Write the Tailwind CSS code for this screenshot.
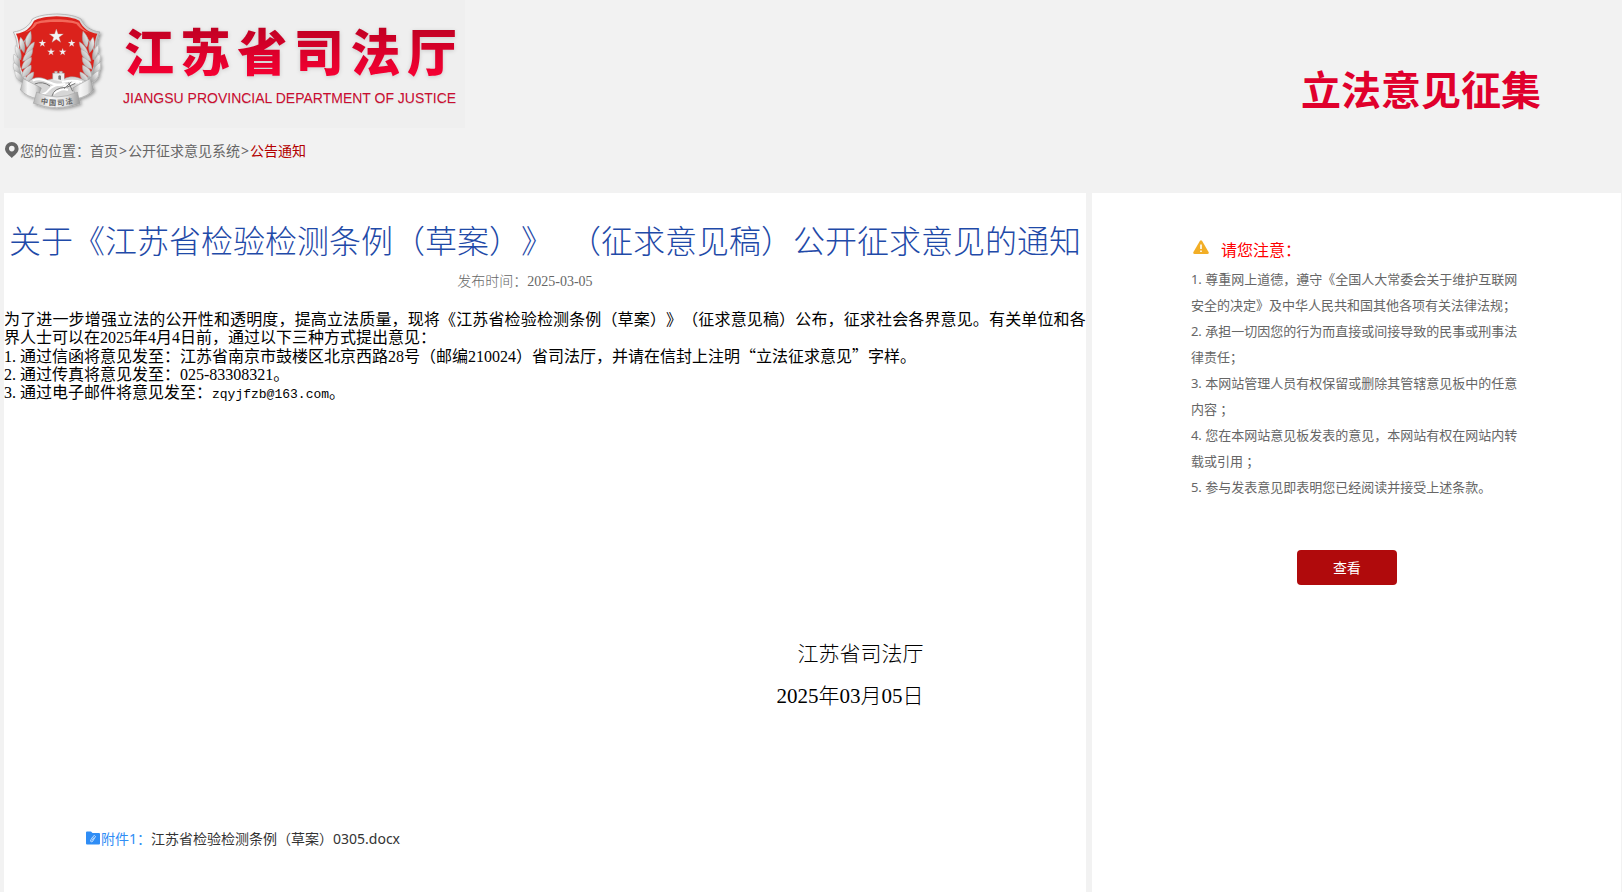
<!DOCTYPE html>
<html lang="zh-CN">

<head>
  <meta charset="UTF-8">
  <meta name="viewport" content="width=device-width, initial-scale=1.0">
  <title>立法意见征集</title>
  <script src="https://cdn.jsdelivr.net/npm/@tailwindcss/browser@4"></script>
</head>

<body class="min-h-screen flex flex-col bg-[#f2f2f2] text-sm text-[#666] font-['Noto_Sans','Noto_Sans_CJK_SC',sans-serif] [text-spacing-trim:space-all]">
  <header class="flex justify-between items-start pl-1 pr-[5%]">
    <a href="#" class="flex h-32 w-[461px] bg-[#efefef]">
      <svg class="w-[116px] h-32 shrink-0" viewBox="12 0 348 384" role="img" aria-label="中国司法">
        <defs>
          <linearGradient id="silver" x1="0" y1="0" x2="1" y2="1">
            <stop offset="0" stop-color="#fff" />
            <stop offset=".5" stop-color="#d0d0d0" />
            <stop offset="1" stop-color="#999" />
          </linearGradient>
          <linearGradient id="ribbon" x1="0" y1="0" x2="1" y2="0">
            <stop offset="0" stop-color="#b5b5b5" />
            <stop offset=".35" stop-color="#f7f7f7" />
            <stop offset=".7" stop-color="#e4e4e4" />
            <stop offset="1" stop-color="#9a9a9a" />
          </linearGradient>
          <filter id="shade" x="-20%" y="-20%" width="140%" height="140%">
            <feDropShadow dx="5" dy="5" stdDeviation="4" flood-color="#000" flood-opacity=".35" />
          </filter>
          <path id="star" d="M0-22 5-7H21L8 3 13 18 0 9-13 18-8 3-21-7H-5Z" />
          <g id="branch">
            <path d="M62 222C46 190 50 152 82 112" fill="none" stroke="#aaa" stroke-width="4" />
            <g fill="url(#silver)" stroke="#a8a8a8" stroke-width="1.5">
              <path d="M81 142C72 126 76 110 92 94C96 116 94 130 81 142Z" />
              <path d="M72 158C57 143 55 128 62 112C74 126 78 142 72 158Z" />
              <path d="M76 162C82 142 91 132 103 126C102 144 94 158 76 162Z" />
              <path d="M62 180C48 166 43 152 47 136C60 146 67 162 62 180Z" />
              <path d="M68 184C72 164 82 154 98 148C98 168 88 180 68 184Z" />
              <path d="M58 204C42 192 38 178 42 162C56 172 63 186 58 204Z" />
              <path d="M65 208C66 190 76 178 94 172C96 190 84 204 65 208Z" />
              <path d="M60 228C42 216 37 204 41 188C56 196 64 210 60 228Z" />
              <path d="M66 232C66 212 76 202 93 195C96 214 86 228 66 232Z" />
              <path d="M68 248C50 240 44 230 45 212C62 220 70 232 68 248Z" />
              <path d="M74 248C76 230 86 220 101 216C102 234 92 246 74 248Z" />
            </g>
          </g>
        </defs>
        <g filter="url(#shade)">
          <path d="M170 42C205 43 228 48 243 57C252 78 273 93 300 96C286 122 289 158 288 190C285 236 240 270 170 292C100 270 56 236 53 190C52 158 55 122 40 96C67 93 88 78 97 57C112 48 135 43 170 42Z" fill="url(#silver)" stroke="#a2a2a2" stroke-width="2" />
          <path d="M170 49C200 50 224 54 238 62C248 84 268 98 292 101C281 124 283 158 282 188C278 230 235 260 170 280C105 260 62 230 59 188C58 158 60 124 48 101C74 98 92 84 102 62C116 54 140 50 170 49Z" fill="#db211b" />
          <path d="M103 68C135 54 205 54 237 68C244 82 255 91 268 98C245 92 237 81 229 72C200 64 140 64 111 72C103 82 95 92 72 98C87 91 97 82 103 68Z" fill="#f2675a" />
          <use href="#branch" />
          <use href="#branch" transform="matrix(-1 0 0 1 341 0)" />
          <path d="M84 246C104 226 128 232 142 240L158 236V219H164V214H172V219H178V214H187V219H193V236C214 226 234 230 258 244C252 276 218 294 170 294C122 294 92 276 84 246Z" fill="#d6d6d6" stroke="#999" stroke-width="1.5" />
          <path d="M160 240V222H192V246Z" fill="#eee" />
          <path d="M175 238V228Q179 223 183 228V240Z" fill="#777" />
          <path d="M98 242Q120 232 146 246T196 252Q160 252 146 270T112 280M186 246Q218 238 246 246M190 262Q216 246 238 248M204 270Q184 262 160 282" fill="none" stroke="#fff" stroke-width="6" />
          <path d="M104 252Q128 242 150 258M192 266L214 246M200 262L226 250M156 288Q162 264 196 262M218 274L206 248" fill="none" stroke="#777" stroke-width="3" />
          <path d="M70 236L124 264L112 296C92 292 74 284 61 270Z" fill="url(#ribbon)" stroke="#999" stroke-width="1.5" />
          <path d="M270 236L218 264L230 296C250 292 268 284 281 270Z" fill="url(#ribbon)" stroke="#999" stroke-width="1.5" />
          <path d="M110 276Q170 306 232 276L240 310Q170 336 100 310Z" fill="url(#ribbon)" stroke="#999" stroke-width="1.5" />
        </g>
        <g fill="#f4f4f4" stroke="#b9a9a5" stroke-width="1">
          <use href="#star" transform="translate(169 109)" />
          <use href="#star" transform="translate(127 130) scale(.52)" />
          <use href="#star" transform="translate(215 130) scale(.52)" />
          <use href="#star" transform="translate(153 156) scale(.52)" />
          <use href="#star" transform="translate(188 156) scale(.52)" />
        </g>
        <g font-family="Noto Sans CJK SC" font-size="22" font-weight="700" fill="#666" text-anchor="middle">
          <text transform="translate(132 312) rotate(8)">中</text>
          <text transform="translate(157 316) rotate(3)">国</text>
          <text transform="translate(183 316) rotate(-3)">司</text>
          <text transform="translate(208 312) rotate(-8)">法</text>
        </g>
      </svg>
      <div class="w-[335px] ml-[3px] pt-5">
        <div class="mx-px h-16 text-[50px] leading-16 font-black [text-align-last:justify] text-transparent bg-linear-to-b from-[#b80020] to-[#ff0035] bg-clip-text drop-shadow-sm">江苏省司法厅</div>
        <div class="mt-1 text-sm leading-5 whitespace-nowrap text-[#cc0c30] font-['Liberation_Sans',sans-serif] text-shadow-2xs">JIANGSU PROVINCIAL DEPARTMENT OF JUSTICE</div>
      </div>
    </a>
    <h1 class="pt-15 text-[40px] leading-15 font-bold text-[#e0002c]">立法意见征集</h1>
  </header>

  <nav class="flex items-center h-[45px] mb-5 pl-1 text-sm">
    <svg class="w-4 h-4 mb-0.5" viewBox="0 0 16 16" fill="#666" aria-hidden="true">
      <path fill-rule="evenodd" d="M7.800 0a6.800 6.800 0 0 1 6.800 6.800C14.600 10.500 11 13 7.800 16 4.600 13 1 10.500 1 6.800A6.800 6.800 0 0 1 7.800 0Zm0 3.800a2.800 2.800 0 1 0 0 5.600 2.800 2.800 0 0 0 0-5.600Z" />
    </svg>
    <span>您的位置：</span>
    <a href="#">首页</a><span class="px-px">&gt;</span>
    <a href="#">公开征求意见系统</a><span class="px-px">&gt;</span>
    <a href="#" class="text-[#b30000]">公告通知</a>
  </nav>

  <div class="flex grow gap-1.5 pl-1 pr-px">
    <main class="w-[66.9%] bg-white pt-6 text-black font-['Liberation_Serif','Noto_Sans_CJK_SC',serif]">
      <h2 class="text-center text-[32px] leading-[50px] font-light text-[#1f4aa8]">关于《江苏省检验检测条例（草案）》&ensp;（征求意见稿）公开征求意见的通知</h2>
      <p class="pr-10 mt-px text-center text-sm leading-7 font-light text-[#666]">发布时间：2025-03-05</p>
      <div class="mt-[15px] text-base leading-[18px] text-justify">
        <p>为了进一步增强立法的公开性和透明度，提高立法质量，现将《江苏省检验检测条例（草案）》（征求意见稿）公布，征求社会各界意见。有关单位和各界人士可以在2025年4月4日前，通过以下三种方式提出意见：</p>
        <p><span class="inline-block w-4">1.</span>通过信函将意见发至：江苏省南京市鼓楼区北京西路28号（邮编210024）省司法厅，并请在信封上注明<span class="leading-none font-['Noto_Sans_CJK_SC']">“立法征求意见”</span>字样。</p>
        <p><span class="inline-block w-4">2.</span>通过传真将意见发至：025-83308321。</p>
        <p><span class="inline-block w-4">3.</span>通过电子邮件将意见发至：<span class="leading-none font-['Liberation_Mono'] text-[13px]">zqyjfzb@163.com</span>。</p>
      </div>
      <div class="mt-[231px] pr-[15%] text-right text-[21px] leading-[42px] font-light">
        <p>江苏省司法厅</p>
        <p>2025年03月05日</p>
      </div>
      <div class="flex items-center mt-[110px] pl-[82px] pb-10 leading-6 font-['Noto_Sans','Noto_Sans_CJK_SC',sans-serif]">
        <svg class="w-3.5 h-3.5 mr-px mb-0.5" viewBox="0 0 14 14" aria-hidden="true">
          <path d="M0 1.500Q0 .5 1 .5H5L6.500 2H13Q14 2 14 3V12.500Q14 13.500 13 13.500H1Q0 13.500 0 12.500Z" fill="#2f8df5" />
          <path d="M9.500 5.500 6.500 10.500Q5 11.500 4.500 10 4.500 9 7 5.500 8.500 3.500 9.500 5.500M8 6.500 6 9.500" fill="none" stroke="#cfe5ff" stroke-width=".9" />
        </svg>
        <span class="text-[#2f8df5]">附件1：</span>
        <a href="#" class="text-[#333]">江苏省检验检测条例（草案）0305.docx</a>
      </div>
    </main>

    <aside class="flex-1 bg-white pt-[41px]">
      <div class="w-[331px] mx-auto">
        <h3 class="flex items-center h-8 text-base text-[#f00]">
          <svg class="w-4 h-3.5 mr-3 ml-0.5 mb-1.5" viewBox="0 0 16 14" aria-hidden="true">
            <path d="M7 .8Q8-.4 9 .8L15.700 12.300Q16 14 14.500 14H1.500Q0 14 .3 12.300Z" fill="#f2ae26" />
            <path d="M8 4.500V9M8 10.500V12" stroke="#fff" stroke-width="1.600" />
          </svg>
          请您注意：
        </h3>
        <div class="text-[13px] leading-[26px]">
          <p>1. 尊重网上道德，遵守《全国人大常委会关于维护互联网安全的决定》及中华人民共和国其他各项有关法律法规；</p>
          <p>2. 承担一切因您的行为而直接或间接导致的民事或刑事法律责任；</p>
          <p>3. 本网站管理人员有权保留或删除其管辖意见板中的任意内容 ；</p>
          <p>4. 您在本网站意见板发表的意见，本网站有权在网站内转载或引用 ；</p>
          <p>5. 参与发表意见即表明您已经阅读并接受上述条款。</p>
        </div>
        <button type="button" class="block w-25 h-[35px] mt-[50px] ml-[106px] rounded bg-[#b00a0c] text-sm text-white">查看</button>
      </div>
    </aside>
  </div>
</body>

</html>
